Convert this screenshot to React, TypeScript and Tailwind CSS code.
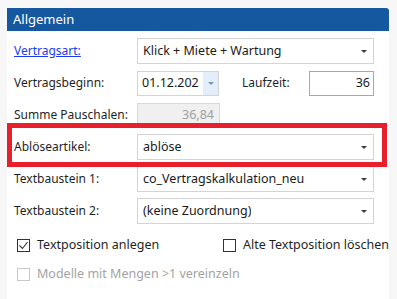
const font = { fontFamily: '"Noto Sans", "Open Sans", sans-serif' };

function Caret({ className = "" }: { className?: string }) {
  return (
    <svg width="6" height="3" viewBox="0 0 6 3" className={className}>
      <path d="M0 0h6L3 3z" fill="currentColor" />
    </svg>
  );
}

function Select({ value }: { value: string }) {
  return (
    <div className="flex h-[26px] w-[237px] items-center justify-between border border-[#d4d4d4] bg-white pl-[5px] pr-[6px] text-[12.5px] text-[#1a1a1a]">
      <span className="truncate">{value}</span>
      <Caret className="text-[#404040]" />
    </div>
  );
}

function Row({ label, link, children }: { label: string; link?: boolean; children: React.ReactNode }) {
  return (
    <div className="flex h-[26px] items-center">
      <div className="w-[130px] shrink-0 pl-[7px] text-[12px]">
        {link ? (
          <span className="text-[#1a3cf0] underline">{label}</span>
        ) : (
          <span className="text-[#1f1f1f]">{label}</span>
        )}
      </div>
      {children}
    </div>
  );
}

function Check({ checked, disabled, label }: { checked?: boolean; disabled?: boolean; label: string }) {
  return (
    <div className="flex items-center gap-[7px] whitespace-nowrap">
      <div
        className={`flex h-[13px] w-[13px] items-center justify-center border bg-white ${
          disabled ? "border-[#c8c8c8]" : "border-[#333]"
        }`}
      >
        {checked && (
          <svg width="11" height="11" viewBox="0 0 11 11">
            <path d="M1.5 5.5l3 3 5-6.5" fill="none" stroke="#333" strokeWidth="1.1" />
          </svg>
        )}
      </div>
      <span className={`text-[12.5px] ${disabled ? "text-[#a3a3a3]" : "text-[#1f1f1f]"}`}>{label}</span>
    </div>
  );
}

export default function App() {
  return (
    <div style={font} className="h-[299px] w-[397px] overflow-hidden bg-[#f7f7f7] pl-[7px] pt-[8px]">
      <div className="relative h-[291px] w-[382px] overflow-hidden bg-white">
        <div className="flex h-[23px] items-center rounded-tr-[3px] bg-[#15589f] pl-[6px] text-[13px] text-white">
          Allgemein
        </div>
        <div className="mt-[7px] flex flex-col gap-[6px]">
          <Row label="Vertragsart:" link>
            <Select value="Klick + Miete + Wartung" />
          </Row>
          <Row label="Vertragsbeginn:">
            <div className="flex h-[25px] w-[82px] items-stretch border border-[#d4d4d4] bg-white">
              <span className="flex-1 self-center pl-[4px] text-[12.5px] text-[#1a1a1a]">01.12.202</span>
              <div className="flex w-[15px] items-center justify-center bg-[#e3eefa]">
                <Caret className="text-[#7a93b8]" />
              </div>
            </div>
            <span className="ml-[23px] w-[67px] text-[12px] text-[#1f1f1f]">Laufzeit:</span>
            <div className="flex h-[25px] w-[65px] items-center justify-end border border-[#a8a8a8] bg-white pr-[3px] text-[12.5px] text-[#1a1a1a]">
              36
            </div>
          </Row>
          <Row label="Summe Pauschalen:">
            <div className="flex h-[25px] w-[83px] items-center justify-end border border-[#d9d9d9] bg-[#f0f0f0] pr-[5px] text-[12.5px] text-[#a0a0a0]">
              36,84
            </div>
          </Row>
          <Row label="Ablöseartikel:">
            <Select value="ablöse" />
          </Row>
          <Row label="Textbaustein 1:">
            <Select value="co_Vertragskalkulation_neu" />
          </Row>
          <Row label="Textbaustein 2:">
            <Select value="(keine Zuordnung)" />
          </Row>
        </div>
        <div className="mt-[13px] flex h-[16px] items-center pl-[10px]">
          <div className="w-[211px]">
            <Check checked label="Textposition anlegen" />
          </div>
          <Check label="Alte Textposition löschen" />
        </div>
        <div className="mt-[13px] flex h-[16px] items-center pl-[10px]">
          <Check disabled label="Modelle mit Mengen >1 vereinzeln" />
        </div>
        <div className="pointer-events-none absolute left-0 top-[115px] h-[44px] w-[380px] border-[5px] border-[#e8202b]" />
      </div>
    </div>
  );
}
